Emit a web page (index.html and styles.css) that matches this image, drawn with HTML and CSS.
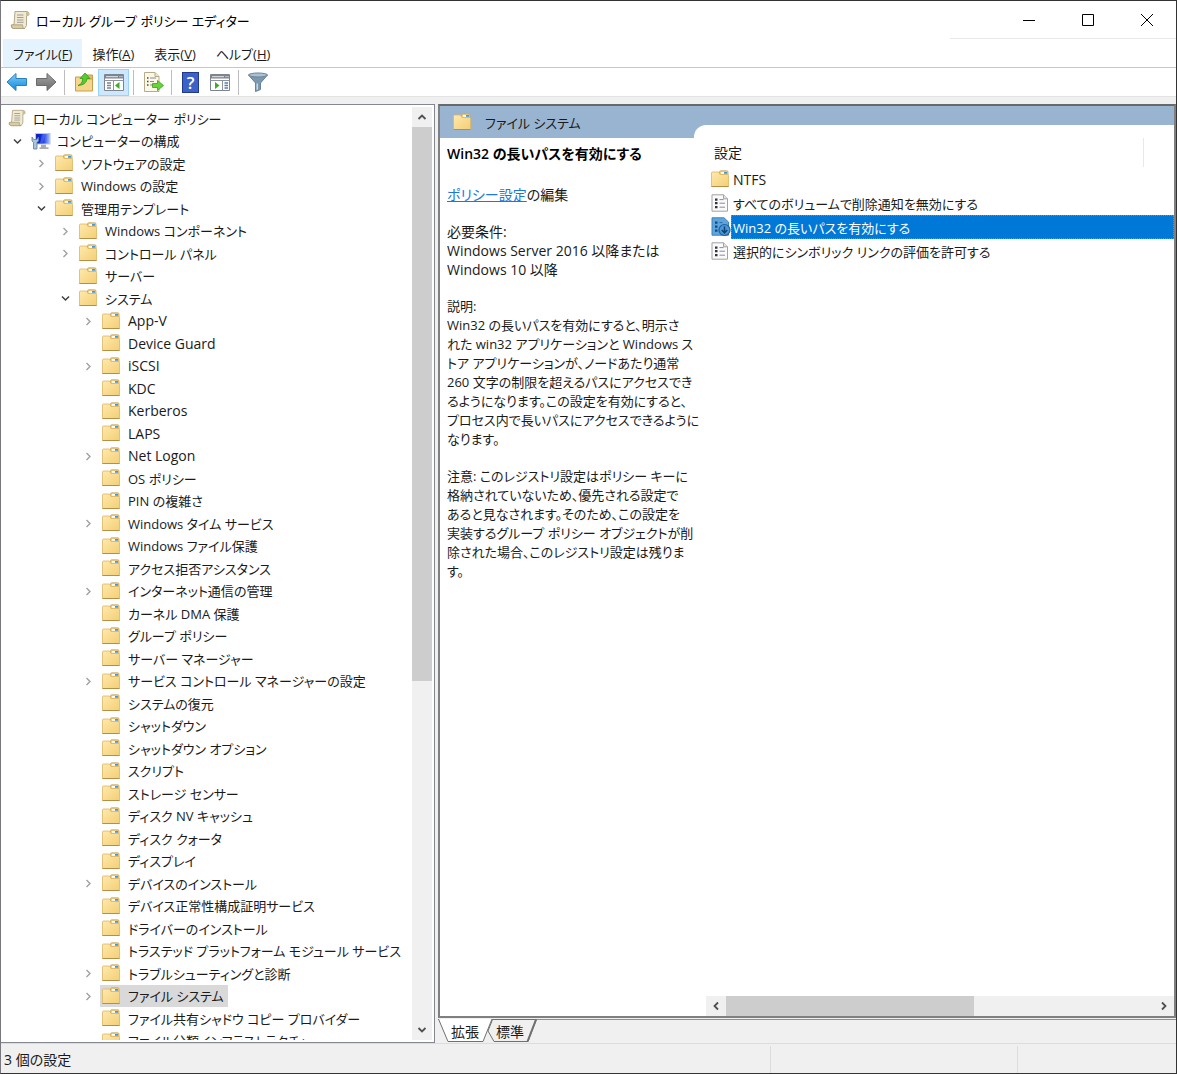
FILE: index.html
```
<!DOCTYPE html>
<html lang="ja">
    <head>
        <meta charset="UTF-8">
        <meta name="viewport" content="width=device-width, initial-scale=1.0">
        <title>ローカル グループ ポリシー エディター</title>
        <link rel="stylesheet" href="styles.css">
    </head>
    <body>

        <!-- shared icons -->
        <svg class="icon-defs" aria-hidden="true">
            <defs>
                <linearGradient id="folder-fill" x1="0" y1="0" x2="1" y2="1">
                    <stop offset="0" stop-color="#ffe9ac"/>
                    <stop offset="1" stop-color="#f3cf76"/>
                </linearGradient>
                <linearGradient id="screen-fill" x1="0" y1="0" x2="1" y2="0">
                    <stop offset="0" stop-color="#0a18b8"/>
                    <stop offset="0.5" stop-color="#1430e0"/>
                    <stop offset="1" stop-color="#a9c8fa"/>
                </linearGradient>
                <linearGradient id="blue-fill" x1="0" y1="0" x2="0" y2="1">
                    <stop offset="0" stop-color="#7fd0fa"/>
                    <stop offset="1" stop-color="#0f86d8"/>
                </linearGradient>
                <linearGradient id="gray-fill" x1="0" y1="0" x2="0" y2="1">
                    <stop offset="0" stop-color="#a5a5a5"/>
                    <stop offset="1" stop-color="#6a6a6a"/>
                </linearGradient>
            </defs>
            <symbol id="folder" viewBox="0 0 18 18">
                <path d="M8.500 4V2Q8.500 .8 9.700 .8H15.800Q17 .8 17 2V5H8.500z" fill="#efcf83" stroke="#c9a152" stroke-width=".8"/>
                <path d="M10 2h6v1.800h-6z" fill="#fff"/>
                <path d="M13 2h3v1.800h-3z" fill="#3f9be0"/>
                <path d="M.5 3Q.5 2 1.500 2H7.500L9 4.500H16.500Q17.500 4.500 17.500 5.500V16.500H.5z" fill="url(#folder-fill)" stroke="#dcb662" stroke-width=".8"/>
                <path d="M.5 16.500h17" stroke="#b58f45"/>
            </symbol>
            <symbol id="scroll" viewBox="0 0 20 20">
                <path d="M5 1.500H17Q19.300 2 19 4.500Q18.800 6 16.500 5.800V15.500L14.500 18.500H3Q1 18 1.200 15.500L4 14.500z" fill="#f1ead0" stroke="#b3a98a"/>
                <path d="M1.500 14.800H12.500Q12.300 18.500 14.500 18.500H3.500Q1 18 1.500 14.800z" fill="#d8cca4" stroke="#a89d7c" stroke-width=".8"/>
                <path d="M16.300 5.500Q15.200 1.800 17.300 1.800Q19.500 2.500 18.800 5.200z" fill="#cbbd90"/>
                <path d="M7 5h6.500M7 7.500h6.500M7 10h6.500M7 12.300h6.500" stroke="#9c9c9c"/>
            </symbol>
            <symbol id="computer" viewBox="0 0 20 18">
                <path d="M4.500 1.500h14.500v10.500H4.500z" fill="url(#screen-fill)" stroke="#c3c8cf" stroke-width="1.200"/>
                <path d="M11 2.200h3l-2 9H9z" fill="#5b84f2" opacity=".5"/>
                <path d="M10 12.700h5v2.500h2.500v1.800H8.500v-1.800H10z" fill="#a9adb3"/>
                <path d="M1 5v4l1.500 1.500v6.500h3.500V10.500L7.500 9V5L5.800 7.500H2.800z" fill="#a9c4dc" stroke="#5e7f9d" stroke-width=".8"/>
            </symbol>
            <symbol id="setting" viewBox="0 0 18 18">
                <path d="M1 .8h11.500L16.500 4.800V17.200H1z" fill="#fafafa" stroke="#a2a2a2"/>
                <path d="M12.500 .8v4h4" fill="#e4e4e4" stroke="#a2a2a2"/>
                <path d="M4 4.500h2.500v2.200H4zM4 8h2.500v2.200H4zM4 12h2.500v2.200H4z" fill="#33333d"/>
                <path d="M8.500 5.600h4M8.500 9.200h5.500M8.500 13.200h5.500" stroke="#8888a0"/>
            </symbol>
            <symbol id="setting-on" viewBox="0 0 20 20">
                <path d="M1 .8h12L17.500 5v13.200H1z" fill="#5fa5dc" stroke="#3b84c0"/>
                <path d="M4 4.500h2.500v2.200H4zM4 8.500h2.500v2.200H4zM4 12.500h2.500v2.200H4z" fill="#114a80"/>
                <path d="M8.500 5.600h3" stroke="#2a6aa5"/>
                <circle cx="13.500" cy="13" r="5.500" fill="#4b97d3" stroke="#1d5f9c" stroke-width="1.200"/>
                <path d="M13.500 9.500v6M10.800 13l2.700 3 2.700-3" fill="none" stroke="#0f4377" stroke-width="1.500"/>
            </symbol>
            <symbol id="right" viewBox="0 0 16 16">
                <path d="M6.500 5 10 8.500 6.500 12" fill="none" stroke="#a0a0a0" stroke-width="1.400"/>
            </symbol>
            <symbol id="down" viewBox="0 0 16 16">
                <path d="M5 6.500 8.500 10 12 6.500" fill="none" stroke="#404040" stroke-width="1.500"/>
            </symbol>
            <symbol id="arrow" viewBox="0 0 20 20">
                <path d="M6.500 12 10 8.500l3.500 3.500" fill="none" stroke="#505050" stroke-width="1.800"/>
            </symbol>
        </svg>

        <header class="titlebar">
            <svg class="app-icon"><use href="#scroll"/></svg>
            <h1>ローカル グループ ポリシー エディター</h1>
            <div class="window-buttons">
                <button type="button" aria-label="最小化"><svg viewBox="0 0 12 12"><path d="M0 6.500h12"/></svg></button>
                <button type="button" aria-label="最大化"><svg viewBox="0 0 12 12"><path d="M.5 .5h11v11H.5z"/></svg></button>
                <button type="button" aria-label="閉じる"><svg viewBox="0 0 12 12"><path d="M0 0l12 12M12 0 0 12"/></svg></button>
            </div>
        </header>

        <nav class="menubar">
            <button type="button" class="active">ファイル(<u>F</u>)</button>
            <button type="button">操作(<u>A</u>)</button>
            <button type="button">表示(<u>V</u>)</button>
            <button type="button">ヘルプ(<u>H</u>)</button>
        </nav>

        <div class="toolbar">
            <button type="button" aria-label="戻る">
                <svg viewBox="0 0 22 22"><path d="M1 11 10 2.500v5h10.500v7H10v5z" fill="url(#blue-fill)" stroke="#2a7fbd"/></svg>
            </button>
            <button type="button" aria-label="進む">
                <svg viewBox="0 0 22 22"><path d="M21 11 12 2.500v5H1.500v7H12v5z" fill="url(#gray-fill)" stroke="#6b6b6b"/></svg>
            </button>
            <span class="divider"></span>
            <button type="button" aria-label="上へ">
                <svg viewBox="0 0 22 22">
                    <path d="M13 4h6.500v5H13z" fill="#e5bd63" stroke="#c79f4b"/>
                    <path d="M2.500 6h6l1.500 2h9.500v12h-17z" fill="#f5d68a" stroke="#c79f4b"/>
                    <path d="M5 14.500Q9.500 13 9.800 7.500H7L12 2l5 5.500h-3Q13.500 14 5 14.500z" fill="#55cc2f" stroke="#2f9a1c" stroke-width=".8"/>
                </svg>
            </button>
            <button type="button" class="active" aria-label="コンソール ツリーの表示">
                <svg viewBox="0 0 22 22">
                    <path d="M1.500 3.500h19v16h-19z" fill="#fff" stroke="#7c8490"/>
                    <path d="M2 4h18v3.500H2z" fill="#7c8490"/>
                    <path d="M3 5.700h12" stroke="#e8eaee"/>
                    <path d="M16.500 5.700h1M18.500 5.700h1" stroke="#fff"/>
                    <path d="M1.500 9.500h19M10.500 9.500v10" stroke="#8d949e"/>
                    <path d="M4 12h4M4 14.500h4M4 17h4" stroke="#7c8490" stroke-width="1.300"/>
                    <path d="M16.500 11v7L12 14.500z" fill="#3cae22"/>
                </svg>
            </button>
            <span class="divider"></span>
            <button type="button" aria-label="一覧のエクスポート">
                <svg viewBox="0 0 22 22">
                    <path d="M2.500 1.500h10.500l4 4v15H2.500z" fill="#fdf8e6" stroke="#b5ab8d"/>
                    <path d="M13 1.500v4h4" fill="#eee4c4" stroke="#b5ab8d"/>
                    <path d="M5 7h1.500M5 10.500h1.500M5 14h1.500" stroke="#444" stroke-width="1.300"/>
                    <path d="M8 7h6M8 10.500h4M8 14h3" stroke="#8888a0" stroke-width="1.200"/>
                    <path d="M10.500 12.500h5V9.500l6 5-6 5v-3h-5z" fill="#66d43a" stroke="#37a01f" stroke-width=".8"/>
                </svg>
            </button>
            <span class="divider"></span>
            <button type="button" aria-label="ヘルプ">
                <span class="help-icon">?</span>
            </button>
            <button type="button" aria-label="操作ウィンドウの表示">
                <svg viewBox="0 0 22 22">
                    <path d="M1.500 3.500h19v16h-19z" fill="#fff" stroke="#7c8490"/>
                    <path d="M2 4h18v3.500H2z" fill="#7c8490"/>
                    <path d="M3 5.700h12" stroke="#e8eaee"/>
                    <path d="M16.500 5.700h1M18.500 5.700h1" stroke="#fff"/>
                    <path d="M1.500 9.500h19M13.500 9.500v10" stroke="#8d949e"/>
                    <path d="M15.500 12h3.500M15.500 14.500h3.500M15.500 17h3.500" stroke="#4f7fb5" stroke-width="1.300"/>
                    <path d="M6 11v7l4.500-3.500z" fill="#3cae22"/>
                </svg>
            </button>
            <span class="divider"></span>
            <button type="button" class="filter" aria-label="フィルター">
                <svg viewBox="0 0 22 22">
                    <path d="M1.500 4 8.500 12v8.500l5-2V12l7-8z" fill="#7c98b0" stroke="#6a8296"/>
                    <path d="M9.500 12.500h1.500V18.500L9.500 19z" fill="#c9d9e6"/>
                    <ellipse cx="11" cy="4" rx="9.500" ry="2" fill="#a9c1d4" stroke="#6a8296"/>
                </svg>
            </button>
        </div>

        <main class="content">
            <section class="tree-pane">
                <ul class="tree">
                    <li class="level-0"><span class="item"><svg class="wide"><use href="#scroll"/></svg>ローカル コンピューター ポリシー</span></li>
                    <li class="level-1"><button type="button" aria-label="閉じる"><svg><use href="#down"/></svg></button><span class="item"><svg class="wide"><use href="#computer"/></svg>コンピューターの構成</span></li>
                    <li class="level-2"><button type="button" aria-label="開く"><svg><use href="#right"/></svg></button><span class="item"><svg><use href="#folder"/></svg>ソフトウェアの設定</span></li>
                    <li class="level-2"><button type="button" aria-label="開く"><svg><use href="#right"/></svg></button><span class="item"><svg><use href="#folder"/></svg>Windows の設定</span></li>
                    <li class="level-2"><button type="button" aria-label="閉じる"><svg><use href="#down"/></svg></button><span class="item"><svg><use href="#folder"/></svg>管理用テンプレート</span></li>
                    <li class="level-3"><button type="button" aria-label="開く"><svg><use href="#right"/></svg></button><span class="item"><svg><use href="#folder"/></svg>Windows コンポーネント</span></li>
                    <li class="level-3"><button type="button" aria-label="開く"><svg><use href="#right"/></svg></button><span class="item"><svg><use href="#folder"/></svg>コントロール パネル</span></li>
                    <li class="level-3"><span class="item"><svg><use href="#folder"/></svg>サーバー</span></li>
                    <li class="level-3"><button type="button" aria-label="閉じる"><svg><use href="#down"/></svg></button><span class="item"><svg><use href="#folder"/></svg>システム</span></li>
                    <li class="level-4"><button type="button" aria-label="開く"><svg><use href="#right"/></svg></button><span class="item" lang="en"><svg><use href="#folder"/></svg>App-V</span></li>
                    <li class="level-4"><span class="item" lang="en"><svg><use href="#folder"/></svg>Device Guard</span></li>
                    <li class="level-4"><button type="button" aria-label="開く"><svg><use href="#right"/></svg></button><span class="item" lang="en"><svg><use href="#folder"/></svg>iSCSI</span></li>
                    <li class="level-4"><span class="item" lang="en"><svg><use href="#folder"/></svg>KDC</span></li>
                    <li class="level-4"><span class="item" lang="en"><svg><use href="#folder"/></svg>Kerberos</span></li>
                    <li class="level-4"><span class="item" lang="en"><svg><use href="#folder"/></svg>LAPS</span></li>
                    <li class="level-4"><button type="button" aria-label="開く"><svg><use href="#right"/></svg></button><span class="item" lang="en"><svg><use href="#folder"/></svg>Net Logon</span></li>
                    <li class="level-4"><span class="item"><svg><use href="#folder"/></svg>OS ポリシー</span></li>
                    <li class="level-4"><span class="item"><svg><use href="#folder"/></svg>PIN の複雑さ</span></li>
                    <li class="level-4"><button type="button" aria-label="開く"><svg><use href="#right"/></svg></button><span class="item"><svg><use href="#folder"/></svg>Windows タイム サービス</span></li>
                    <li class="level-4"><span class="item"><svg><use href="#folder"/></svg>Windows ファイル保護</span></li>
                    <li class="level-4"><span class="item"><svg><use href="#folder"/></svg>アクセス拒否アシスタンス</span></li>
                    <li class="level-4"><button type="button" aria-label="開く"><svg><use href="#right"/></svg></button><span class="item"><svg><use href="#folder"/></svg>インターネット通信の管理</span></li>
                    <li class="level-4"><span class="item"><svg><use href="#folder"/></svg>カーネル DMA 保護</span></li>
                    <li class="level-4"><span class="item"><svg><use href="#folder"/></svg>グループ ポリシー</span></li>
                    <li class="level-4"><span class="item"><svg><use href="#folder"/></svg>サーバー マネージャー</span></li>
                    <li class="level-4"><button type="button" aria-label="開く"><svg><use href="#right"/></svg></button><span class="item"><svg><use href="#folder"/></svg>サービス コントロール マネージャーの設定</span></li>
                    <li class="level-4"><span class="item"><svg><use href="#folder"/></svg>システムの復元</span></li>
                    <li class="level-4"><span class="item"><svg><use href="#folder"/></svg>シャットダウン</span></li>
                    <li class="level-4"><span class="item"><svg><use href="#folder"/></svg>シャットダウン オプション</span></li>
                    <li class="level-4"><span class="item"><svg><use href="#folder"/></svg>スクリプト</span></li>
                    <li class="level-4"><span class="item"><svg><use href="#folder"/></svg>ストレージ センサー</span></li>
                    <li class="level-4"><span class="item"><svg><use href="#folder"/></svg>ディスク NV キャッシュ</span></li>
                    <li class="level-4"><span class="item"><svg><use href="#folder"/></svg>ディスク クォータ</span></li>
                    <li class="level-4"><span class="item"><svg><use href="#folder"/></svg>ディスプレイ</span></li>
                    <li class="level-4"><button type="button" aria-label="開く"><svg><use href="#right"/></svg></button><span class="item"><svg><use href="#folder"/></svg>デバイスのインストール</span></li>
                    <li class="level-4"><span class="item"><svg><use href="#folder"/></svg>デバイス正常性構成証明サービス</span></li>
                    <li class="level-4"><span class="item"><svg><use href="#folder"/></svg>ドライバーのインストール</span></li>
                    <li class="level-4"><span class="item"><svg><use href="#folder"/></svg>トラステッド プラットフォーム モジュール サービス</span></li>
                    <li class="level-4"><button type="button" aria-label="開く"><svg><use href="#right"/></svg></button><span class="item"><svg><use href="#folder"/></svg>トラブルシューティングと診断</span></li>
                    <li class="level-4"><button type="button" aria-label="開く"><svg><use href="#right"/></svg></button><span class="item selected"><svg><use href="#folder"/></svg>ファイル システム</span></li>
                    <li class="level-4"><span class="item"><svg><use href="#folder"/></svg>ファイル共有シャドウ コピー プロバイダー</span></li>
                    <li class="level-4"><span class="item"><svg><use href="#folder"/></svg>ファイル分類インフラストラクチャ</span></li>
                </ul>
                <div class="scrollbar vertical">
                    <button type="button" aria-label="上へスクロール"><svg><use href="#arrow"/></svg></button>
                    <div class="track"><div class="thumb"></div></div>
                    <button type="button" class="flip" aria-label="下へスクロール"><svg><use href="#arrow"/></svg></button>
                </div>
            </section>

            <section class="result-pane">
                <div class="result-view">
                    <div class="result-header">
                        <h2><svg><use href="#folder"/></svg>ファイル システム</h2>
                        <div class="header-curve"></div>
                    </div>
                    <div class="result-body">
                        <article class="description">
                            <h3>Win32 の長いパスを有効にする</h3>
                            <p class="summary"><a href="#">ポリシー設定</a>の編集</p>
                            <p class="summary">必要条件:<br>Windows Server 2016 以降または<br>Windows 10 以降</p>
                            <p>説明:<br>Win32 の長いパスを有効にすると、明示さ<br>れた win32 アプリケーションと Windows ス<br>トア アプリケーションが、ノードあたり通常<br>260 文字の制限を超えるパスにアクセスでき<br>るようになります。この設定を有効にすると、<br>プロセス内で長いパスにアクセスできるように<br>なります。</p>
                            <p>注意: このレジストリ設定はポリシー キーに<br>格納されていないため、優先される設定で<br>あると見なされます。そのため、この設定を<br>実装するグループ ポリシー オブジェクトが削<br>除された場合、このレジストリ設定は残りま<br>す。</p>
                        </article>
                        <div class="list-area">
                            <table>
                                <thead>
                                    <tr><th colspan="2"><span>設定</span></th></tr>
                                </thead>
                                <tbody>
                                    <tr><td class="icon-cell"><svg><use href="#folder"/></svg></td><td lang="en">NTFS</td></tr>
                                    <tr><td class="icon-cell"><svg><use href="#setting"/></svg></td><td>すべてのボリュームで削除通知を無効にする</td></tr>
                                    <tr class="selected"><td class="icon-cell"><svg class="wide"><use href="#setting-on"/></svg></td><td>Win32 の長いパスを有効にする</td></tr>
                                    <tr><td class="icon-cell"><svg><use href="#setting"/></svg></td><td>選択的にシンボリック リンクの評価を許可する</td></tr>
                                </tbody>
                            </table>
                            <div class="scrollbar horizontal">
                                <button type="button" class="turn-left" aria-label="左へスクロール"><svg><use href="#arrow"/></svg></button>
                                <div class="track"><div class="thumb"></div></div>
                                <button type="button" class="turn-right" aria-label="右へスクロール"><svg><use href="#arrow"/></svg></button>
                            </div>
                        </div>
                    </div>
                </div>
                <div class="tabs">
                    <svg class="tab-shapes" viewBox="0 0 100 24">
                        <path d="M50 12 54.500 .5H98.500L90 22.500H56z" fill="#f0f0f0" stroke="#707070"/>
                        <path d="M98 .5 89.500 22.500" stroke="#707070" stroke-width="2"/>
                        <path d="M.5 0 10 22.500H45L54 0z" fill="#fff"/>
                        <path d="M.5 0 10 22.500H45L54 0" fill="none" stroke="#707070"/>
                    </svg>
                    <button type="button">拡張</button>
                    <button type="button">標準</button>
                </div>
            </section>
        </main>

        <footer class="statusbar">
            <span>3 個の設定</span>
            <span></span>
            <span></span>
        </footer>

    </body>
</html>
```
FILE: styles.css
```
*{
    margin: 0;
    padding: 0;
    box-sizing: border-box;
}
body{
    display: flex;
    flex-direction: column;
    height: 100vh;
    overflow: hidden;
    border: 1px solid #333333;
    border-left-color: #77777d;
    background-color: #f0f0f0;
    color: #1a1a1a;
    font-family: "Open Sans", "Noto Sans CJK JP", sans-serif;
    font-size: 13px;
    font-feature-settings: "palt";
    white-space: nowrap;
}
:lang(en){
    font-size: 14px;
}
button{
    border: none;
    background: none;
    color: inherit;
    font: inherit;
    font-feature-settings: inherit;
}
svg{
    display: block;
    flex-shrink: 0;
}
.icon-defs{
    position: absolute;
    width: 0;
    height: 0;
}

/* title and menus */
.titlebar{
    display: flex;
    align-items: center;
    height: 38px;
    padding-left: 9px;
    background-color: #ffffff;
}
.titlebar h1{
    flex: 1;
    margin-left: 6px;
    color: #000000;
    font-size: 13px;
    font-weight: 400;
}
.app-icon{
    width: 20px;
    height: 20px;
}
.window-buttons{
    display: flex;
    align-self: stretch;
    padding-left: 49px;
    border-bottom: 1px solid #e8e8e8;
}
.window-buttons button{
    display: flex;
    align-items: center;
    justify-content: center;
    width: 59px;
}
.window-buttons svg{
    width: 12px;
    height: 12px;
    fill: none;
    stroke: #000000;
    overflow: visible;
}
.menubar{
    display: flex;
    height: 29px;
    padding: 0 2px;
    border-bottom: 1px solid #c3c8d0;
    background-color: #ffffff;
}
.menubar button{
    padding: 0 10px;
}
.menubar .active{
    background-color: #e5f3ff;
}
.toolbar{
    display: flex;
    align-items: center;
    height: 29px;
    padding-left: 1px;
    border-bottom: 1px solid #e3e3e3;
    background-color: #ffffff;
}
.toolbar button{
    display: flex;
    align-items: center;
    justify-content: center;
    width: 29px;
    height: 27px;
}
.toolbar .active{
    width: 31px;
    border: 1px solid #99d1ff;
    background-color: #cce8ff;
}
.toolbar svg{
    width: 22px;
    height: 22px;
}
.divider{
    width: 1px;
    height: 25px;
    margin: 0 4px;
    background-color: #bdbdbd;
}
.help-icon{
    width: 17px;
    height: 21px;
    border: 1px solid #20398c;
    background-color: #3c62c8;
    color: #ffffff;
    font-size: 17px;
    font-weight: 600;
    line-height: 19px;
}

/* tree */
.content{
    display: flex;
    flex: 1;
    min-height: 0;
    padding-top: 7px;
}
.tree-pane{
    display: flex;
    flex: 0 0 434px;
    min-width: 0;
    border: 1px solid #828790;
    border-left-width: 0;
    background-color: #ffffff;
    padding: 2px 2px 2px 0;
}
.tree{
    flex: 1;
    min-width: 0;
    overflow: hidden;
    list-style: none;
}
.tree li{
    display: flex;
    align-items: center;
    height: 22px;
}
.tree li:nth-child(even){
    height: 23px;
}
.tree li button{
    width: 16px;
    margin-right: -16px;
}
.tree li button svg{
    width: 16px;
    height: 16px;
}
.level-0{
    padding-left: 4px;
}
.level-1{
    padding-left: 8px;
}
.level-2{
    padding-left: 32px;
}
.level-3{
    padding-left: 56px;
}
.level-4{
    padding-left: 79px;
}
.item{
    display: flex;
    align-items: center;
    gap: 8px;
    height: 22px;
    margin-left: 20px;
    padding: 0 4px 0 2px;
}
.level-0 .item{
    margin-left: 0;
}
.item svg{
    width: 18px;
    height: 18px;
}
.item .wide{
    width: 20px;
    margin-right: -2px;
}
.item.selected{
    background-color: #d9d9d9;
}

/* scroll bars */
.scrollbar{
    display: flex;
    background-color: #f0f0f0;
}
.scrollbar button{
    flex: 0 0 20px;
}
.scrollbar svg{
    width: 20px;
    height: 20px;
}
.track{
    flex: 1;
}
.thumb{
    background-color: #cdcdcd;
}
.vertical{
    flex-direction: column;
    width: 20px;
}
.vertical .thumb{
    width: 100%;
    height: 62%;
}
.horizontal{
    height: 20px;
}
.horizontal .thumb{
    width: 58%;
    height: 100%;
}
.flip svg{
    transform: rotate(180deg);
}
.turn-left svg{
    transform: rotate(270deg);
}
.turn-right svg{
    transform: rotate(90deg);
}

/* result pane */
.result-pane{
    display: flex;
    flex: 1;
    flex-direction: column;
    min-width: 0;
    margin-left: 3px;
}
.result-view{
    display: flex;
    flex: 1;
    flex-direction: column;
    min-height: 0;
    border: 2px solid #808080;
    border-top-color: #696969;
    background-color: #ffffff;
}
.result-header{
    display: flex;
    align-items: flex-end;
    height: 32px;
    background-color: #99b4d1;
}
.result-header h2{
    display: flex;
    align-items: center;
    align-self: stretch;
    gap: 14px;
    width: 254px;
    padding-left: 13px;
    font-size: 13px;
    font-weight: 400;
}
.result-header svg{
    width: 18px;
    height: 18px;
}
.header-curve{
    flex: 1;
    height: 13px;
    border-top-left-radius: 12px;
    background-color: #ffffff;
}
.result-body{
    display: flex;
    flex: 1;
    min-height: 0;
}
.description{
    flex: 0 0 266px;
    min-width: 0;
    padding: 6px 0 0 7px;
    line-height: 19px;
}
.description h3{
    color: #000000;
    font-size: 14px;
    font-weight: 600;
}
.description p{
    margin-top: 18px;
}
.description .summary{
    font-size: 14px;
}
.description h3 + p{
    margin-top: 22px;
}
.description a{
    color: #1a7ad9;
}
.list-area{
    display: flex;
    flex: 1;
    flex-direction: column;
    justify-content: space-between;
    min-width: 0;
}
table{
    width: 100%;
    border-collapse: collapse;
}
th{
    height: 29px;
    padding-right: 30px;
    font-size: 14px;
    font-weight: 400;
    text-align: left;
}
th span{
    display: block;
    padding-left: 8px;
    border-right: 1px solid #e8e8e8;
    line-height: 29px;
}
td{
    height: 24px;
    padding-left: 2px;
}
.icon-cell{
    width: 25px;
    padding-left: 5px;
}
td svg{
    width: 18px;
    height: 18px;
}
td .wide{
    width: 20px;
    height: 20px;
}
tr.selected td:last-child{
    background-color: #0078d7;
    color: #ffffff;
    outline: 1px dotted #c77a2c;
    outline-offset: -1px;
}

/* bottom tabs */
.tabs{
    position: relative;
    display: flex;
    height: 24px;
    margin-top: 1px;
    padding-left: 9px;
    border-top: 1px solid #909090;
}
.tab-shapes{
    position: absolute;
    top: -1px;
    left: 0;
    width: 100px;
    height: 24px;
}
.tabs button{
    position: relative;
    width: 36px;
    margin-right: 9px;
    font-size: 14px;
    line-height: 20px;
}
.statusbar{
    display: flex;
    height: 30px;
    padding-top: 2px;
    border-top: 1px solid #dcdcdc;
    font-size: 14px;
    line-height: 28px;
}
.statusbar span{
    width: 159px;
    padding-left: 3px;
    border-left: 1px solid #dddddd;
}
.statusbar span:first-child{
    flex: 1;
    border-left: none;
}
.statusbar span:nth-child(2){
    width: 247px;
}
```
